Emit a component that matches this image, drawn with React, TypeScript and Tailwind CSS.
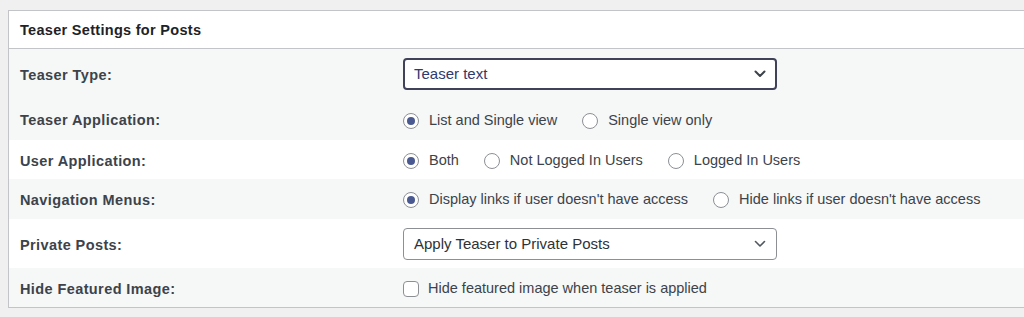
export default function App() {
  const font = { fontFamily: '"Liberation Sans", Arial, sans-serif' };

  const Radio = ({ checked, label }: { checked?: boolean; label: string }) => (
    <label className="flex items-center gap-[10px]">
      <span className="w-4 h-4 rounded-full border border-[#8c8f94] bg-white flex items-center justify-center shrink-0">
        {checked && <span className="w-2 h-2 rounded-full bg-[#4a5a91]" />}
      </span>
      <span>{label}</span>
    </label>
  );

  const Chevron = ({ bold }: { bold?: boolean }) => (
    <svg width="12" height="8" viewBox="0 0 12 8" className="shrink-0">
      <path d="M1.5 1.5 L6 6 L10.5 1.5" fill="none" stroke={bold ? '#3c434a' : '#50575e'} strokeWidth={bold ? 2 : 1.6} strokeLinecap="round" strokeLinejoin="round" />
    </svg>
  );

  const Row = ({ label, grey, h, children }: { label: string; grey?: boolean; h: string; children: React.ReactNode }) => (
    <div className={`flex items-center ${h} ${grey ? 'bg-[#f6f7f7]' : 'bg-white'}`}>
      <div className="w-[394px] pl-[11px] pt-[4px] font-bold tracking-[0.4px] text-[#3c434a] shrink-0">{label}</div>
      <div className="flex items-center text-[#3c434a]">{children}</div>
    </div>
  );

  return (
    <main className="w-[1024px] h-[317px] overflow-hidden bg-[#f0f0f1] pt-[10px] pl-2 text-[14.5px]" style={font}>
      <div className="border border-r-0 border-[#c3c4c7] bg-white">
        <div className="h-[38px] flex items-center pl-[11px] pt-[3px] font-bold tracking-[0.3px] text-[#1d2327] border-b border-[#c3c4c7]">
          Teaser Settings for Posts
        </div>
        <Row label="Teaser Type:" grey h="h-[49px]">
          <div className="w-[374px] h-8 rounded-[4px] border-2 border-[#3f4259] bg-white flex items-center justify-between pl-[9px] pr-[9px] text-[15px] text-[#2f3a6e]">
            <span className="pt-[1px]">Teaser text</span>
            <Chevron bold />
          </div>
        </Row>
        <Row label="Teaser Application:" grey h="h-[42px]">
          <div className="flex items-center gap-[25px] pt-[3px]">
            <Radio checked label="List and Single view" />
            <Radio label="Single view only" />
          </div>
        </Row>
        <Row label="User Application:" h="h-[39px]">
          <div className="flex items-center gap-[25px] pt-[2px]">
            <Radio checked label="Both" />
            <Radio label="Not Logged In Users" />
            <Radio label="Logged In Users" />
          </div>
        </Row>
        <Row label="Navigation Menus:" grey h="h-[40px]">
          <div className="flex items-center gap-[25px] pt-[2px]">
            <Radio checked label="Display links if user doesn't have access" />
            <Radio label="Hide links if user doesn't have access" />
          </div>
        </Row>
        <Row label="Private Posts:" h="h-[49px]">
          <div className="w-[374px] h-8 rounded-[4px] border border-[#8c8f94] bg-white flex items-center justify-between pl-[10px] pr-[10px] text-[15px] text-[#2c3338]">
            <span className="pt-[1px]">Apply Teaser to Private Posts</span>
            <Chevron />
          </div>
        </Row>
        <Row label="Hide Featured Image:" grey h="h-[39px]">
          <label className="flex items-center gap-[9px] pt-[3px]">
            <span className="w-4 h-4 rounded-[4px] border border-[#8c8f94] bg-white shrink-0" />
            <span>Hide featured image when teaser is applied</span>
          </label>
        </Row>
      </div>
    </main>
  );
}
